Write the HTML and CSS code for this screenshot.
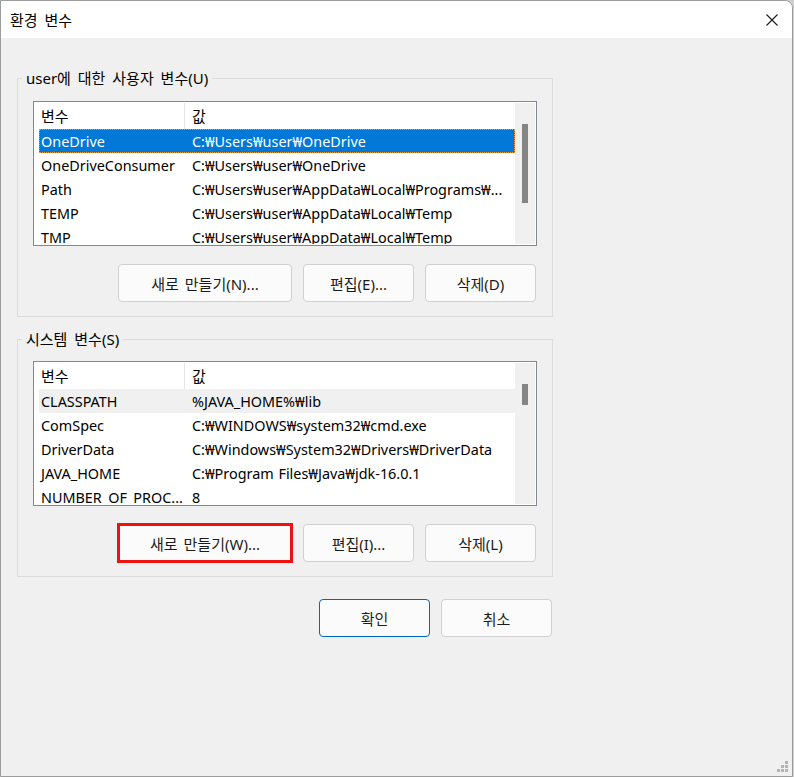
FILE: index.html
```html
<!DOCTYPE html>
<html lang="ko">
<head>
    <meta charset="UTF-8">
    <title>환경 변수</title>
    <link rel="stylesheet" href="styles.css">
</head>
<body>
    <div class="window">
        <div class="titlebar">
            <span class="title">환경 변수</span>
            <svg class="close" width="12" height="12" viewBox="0 0 12 12">
                <path d="M0.5 0.5 L11.5 11.5 M11.5 0.5 L0.5 11.5" stroke="#1a1a1a" stroke-width="1.1" fill="none"/>
            </svg>
        </div>

        <div class="content">
            <!-- user variables -->
            <fieldset class="group">
                <legend>user에 대한 사용자 변수(U)</legend>
                <div class="list">
                    <div class="table">
                        <div class="head"><span class="c1">변수</span><span class="c2">값</span></div>
                        <div class="row selected"><span class="c1">OneDrive</span><span class="c2">C:₩Users₩user₩OneDrive</span></div>
                        <div class="row"><span class="c1">OneDriveConsumer</span><span class="c2">C:₩Users₩user₩OneDrive</span></div>
                        <div class="row"><span class="c1">Path</span><span class="c2">C:₩Users₩user₩AppData₩Local₩Programs₩...</span></div>
                        <div class="row"><span class="c1">TEMP</span><span class="c2">C:₩Users₩user₩AppData₩Local₩Temp</span></div>
                        <div class="row"><span class="c1">TMP</span><span class="c2">C:₩Users₩user₩AppData₩Local₩Temp</span></div>
                    </div>
                    <div class="scrollbar"><div class="thumb thumb-user"></div></div>
                </div>
                <div class="buttons">
                    <button class="btn wide">새로 만들기(N)...</button>
                    <button class="btn">편집(E)...</button>
                    <button class="btn">삭제(D)</button>
                </div>
            </fieldset>

            <!-- system variables -->
            <fieldset class="group group-system">
                <legend>시스템 변수(S)</legend>
                <div class="list">
                    <div class="table">
                        <div class="head"><span class="c1">변수</span><span class="c2">값</span></div>
                        <div class="row hover"><span class="c1">CLASSPATH</span><span class="c2">%JAVA_HOME%₩lib</span></div>
                        <div class="row"><span class="c1">ComSpec</span><span class="c2">C:₩WINDOWS₩system32₩cmd.exe</span></div>
                        <div class="row"><span class="c1">DriverData</span><span class="c2">C:₩Windows₩System32₩Drivers₩DriverData</span></div>
                        <div class="row"><span class="c1">JAVA_HOME</span><span class="c2">C:₩Program Files₩Java₩jdk-16.0.1</span></div>
                        <div class="row"><span class="c1">NUMBER_OF_PROC...</span><span class="c2">8</span></div>
                    </div>
                    <div class="scrollbar"><div class="thumb thumb-system"></div></div>
                </div>
                <div class="buttons">
                    <span class="mark"><button class="btn wide">새로 만들기(W)...</button></span>
                    <button class="btn">편집(I)...</button>
                    <button class="btn">삭제(L)</button>
                </div>
            </fieldset>

            <div class="footer">
                <button class="btn primary">확인</button>
                <button class="btn">취소</button>
            </div>
        </div>

        <svg class="grip" width="12" height="12" viewBox="0 0 12 12">
            <rect x="8" y="0" width="3" height="3" fill="#b4b4b4"/>
            <rect x="4" y="4" width="3" height="3" fill="#b4b4b4"/>
            <rect x="8" y="4" width="3" height="3" fill="#b4b4b4"/>
            <rect x="0" y="8" width="3" height="3" fill="#b4b4b4"/>
            <rect x="4" y="8" width="3" height="3" fill="#b4b4b4"/>
            <rect x="8" y="8" width="3" height="3" fill="#b4b4b4"/>
        </svg>
    </div>
</body>
</html>
```

FILE: styles.css
```css
* {
    box-sizing: border-box;
}

body {
    margin: 0;
    background-color: #cfcfcf;
    font-family: "Noto Sans", "Noto Sans CJK KR", sans-serif;
    font-size: 15px;
    word-spacing: 3px;
    color: #000;
}

.window {
    position: relative;
    width: 793px;
    height: 777px;
    border: 1px solid #9c9c9c;
    border-top-right-radius: 8px;
    background-color: #f0f0f0;
    overflow: hidden;
}

.titlebar {
    height: 37px;
    background-color: #fff;
    display: flex;
    align-items: center;
    justify-content: space-between;
    padding: 0 14px 0 9px;
}

.title {
    line-height: 20px;
}

.content {
    padding: 30px 0 0 16px;
}

.group {
    width: 536px;
    margin: 0;
    padding: 13px 15px 14px 15px;
    border: 1px solid #dcdcdc;
}

.group legend {
    padding: 0 4px;
    margin-left: -11px;
    line-height: 20px;
}

.group-system {
    margin-top: 12px;
    padding-top: 12px;
}

/* list view */
.list {
    display: flex;
    height: 145px;
    padding: 1px;
    border: 1px solid #828790;
    background-color: #fff;
}

.table {
    flex: 1;
    padding-left: 4px;
    overflow: hidden;
}

.head,
.row {
    display: grid;
    grid-template-columns: 146px 1fr;
    white-space: nowrap;
}

.head {
    height: 26px;
    line-height: 26px;
}

.head .c1 {
    border-right: 1px solid #e5e5e5;
}

.row {
    height: 24px;
    padding-top: 1px;
    line-height: 23px;
    font-size: 14.4px;
    word-spacing: 1px;
}

.c1 {
    padding-left: 2px;
    overflow: hidden;
}

.c2 {
    padding-left: 7px;
    overflow: hidden;
}

.row.selected {
    background-color: #0078d7;
    color: #fff;
    outline: 1px dotted #f09a3a;
    outline-offset: -1px;
}

.row.hover {
    background-color: #f0f0f0;
}

.scrollbar {
    width: 20px;
    background-color: #f0f0f0;
    padding: 21px 0 0 7px;
}

.thumb {
    width: 6px;
    background-color: #858585;
}

.thumb-user {
    height: 79px;
}

.thumb-system {
    height: 21px;
}

/* buttons */
.buttons,
.footer {
    display: flex;
    justify-content: flex-end;
    gap: 11px;
    padding-right: 1px;
}

.buttons {
    margin-top: 18px;
}

.footer {
    width: 536px;
    margin-top: 22px;
}

.btn {
    width: 111px;
    height: 38px;
    padding: 0;
    border: 1px solid #d0d0d0;
    border-radius: 4px;
    background-color: #fbfbfb;
    font-family: inherit;
    font-size: 15px;
    word-spacing: 2px;
    color: #1b1b1b;
}

.btn.wide {
    width: 174px;
}

.btn.primary {
    border-color: #0067c0;
}

.mark {
    display: flex;
    outline: 3px solid #ee1111;
    outline-offset: -2px;
}

.grip {
    position: absolute;
    right: 3px;
    bottom: 3px;
}
```
